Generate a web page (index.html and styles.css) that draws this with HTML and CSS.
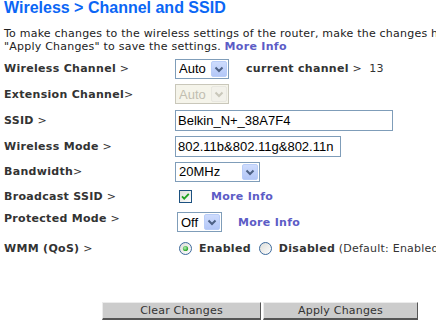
FILE: index.html
```html
<!DOCTYPE html>
<html lang="en">
<head>
    <meta charset="UTF-8">
    <title>Wireless - Channel and SSID</title>
    <link rel="stylesheet" href="styles.css">
</head>
<body>
    <div class="page">
        <h1 class="title">Wireless &gt; Channel and SSID</h1>
        <p class="intro">To make changes to the wireless settings of the router, make the changes here. Click<br>"Apply Changes" to save the settings. <a class="more" href="#">More Info</a></p>

        <div class="form">
            <div class="row short">
                <label class="label"><b>Wireless Channel</b> &gt;</label>
                <div class="field">
                    <span class="dd w54">
                        <select><option>Auto</option></select>
                        <span class="dd-btn"><svg width="14" height="14" viewBox="0 0 14 14"><path d="M3.5 5.5 L7 9 L10.5 5.5" fill="none" stroke="#4d6185" stroke-width="2"/></svg></span>
                    </span>
                    <span class="current"><b>current channel</b> &gt;&nbsp; 13</span>
                </div>
            </div>

            <div class="row">
                <label class="label"><b>Extension Channel</b>&gt;</label>
                <div class="field">
                    <span class="dd w54 off">
                        <select disabled><option>Auto</option></select>
                        <span class="dd-btn"><svg width="14" height="14" viewBox="0 0 14 14"><path d="M3.5 5.5 L7 9 L10.5 5.5" fill="none" stroke="#c9c7ba" stroke-width="2"/></svg></span>
                    </span>
                </div>
            </div>

            <div class="row">
                <label class="label"><b>SSID</b> &gt;</label>
                <div class="field">
                    <input class="text w218" type="text" value="Belkin_N+_38A7F4">
                </div>
            </div>

            <div class="row">
                <label class="label"><b>Wireless Mode</b> &gt;</label>
                <div class="field">
                    <input class="text w166" type="text" value="802.11b&amp;802.11g&amp;802.11n">
                </div>
            </div>

            <div class="row short">
                <label class="label"><b>Bandwidth</b>&gt;</label>
                <div class="field">
                    <span class="dd w85">
                        <select><option>20MHz</option></select>
                        <span class="dd-btn"><svg width="14" height="14" viewBox="0 0 14 14"><path d="M3.5 5.5 L7 9 L10.5 5.5" fill="none" stroke="#4d6185" stroke-width="2"/></svg></span>
                    </span>
                </div>
            </div>

            <div class="row short">
                <label class="label"><b>Broadcast SSID</b> &gt;</label>
                <div class="field">
                    <svg class="check" width="13" height="13" viewBox="0 0 13 13">
                        <defs>
                            <linearGradient id="cbfill" x1="0" y1="0" x2="1" y2="1">
                                <stop offset="0" stop-color="#dcdcd7"/>
                                <stop offset="1" stop-color="#ffffff"/>
                            </linearGradient>
                        </defs>
                        <rect x="0.5" y="0.5" width="12" height="12" fill="url(#cbfill)" stroke="#1c5180"/>
                        <path d="M3 6.3 L5.2 8.6 L9.8 3.8" fill="none" stroke="#21a121" stroke-width="1.8"/>
                    </svg>
                    <a class="more info1" href="#">More Info</a>
                </div>
            </div>

            <div class="row">
                <label class="label up"><b>Protected Mode</b> &gt;</label>
                <div class="field">
                    <span class="dd w45 shift">
                        <select><option>Off</option></select>
                        <span class="dd-btn"><svg width="14" height="14" viewBox="0 0 14 14"><path d="M3.5 5.5 L7 9 L10.5 5.5" fill="none" stroke="#4d6185" stroke-width="2"/></svg></span>
                    </span>
                    <a class="more info2" href="#">More Info</a>
                </div>
            </div>

            <div class="row">
                <label class="label"><b>WMM (QoS)</b> &gt;</label>
                <div class="field">
                    <svg class="radio first" width="13" height="13" viewBox="0 0 13 13">
                        <defs>
                            <linearGradient id="rdfill" x1="0" y1="0" x2="1" y2="1">
                                <stop offset="0" stop-color="#dcdcd7"/>
                                <stop offset="1" stop-color="#ffffff"/>
                            </linearGradient>
                            <radialGradient id="dot" cx="0.4" cy="0.4" r="0.6">
                                <stop offset="0" stop-color="#b8f0b8"/>
                                <stop offset="1" stop-color="#21a121"/>
                            </radialGradient>
                        </defs>
                        <circle cx="6.5" cy="6.5" r="6" fill="url(#rdfill)" stroke="#3d6a9c"/>
                        <circle cx="6.5" cy="6.5" r="2.6" fill="url(#dot)"/>
                    </svg>
                    <span class="opt"><b>Enabled</b></span>
                    <svg class="radio" width="13" height="13" viewBox="0 0 13 13">
                        <circle cx="6.5" cy="6.5" r="6" fill="url(#rdfill)" stroke="#3d6a9c"/>
                    </svg>
                    <span class="opt"><b>Disabled</b> (Default: Enabled)</span>
                </div>
            </div>
        </div>

        <div class="actions">
            <button class="btn clear" type="button">Clear Changes</button>
            <button class="btn apply" type="button">Apply Changes</button>
        </div>
    </div>
</body>
</html>
```

FILE: styles.css
```css
body {
    margin: 0;
    overflow: hidden;
    background: #fff;
    font-family: "DejaVu Sans", Verdana, sans-serif;
    font-size: 11px;
    letter-spacing: 0.22px;
    color: #222;
}

b {
    letter-spacing: 0.3px;
}

.page {
    width: 640px;
    padding: 0 4px;
}

.title {
    margin: 0;
    font: bold 16px/16px "Liberation Sans", Arial, sans-serif;
    letter-spacing: 0;
    color: #0b66f5;
}

.intro {
    margin: 11px 0 0;
    line-height: 13px;
    white-space: nowrap;
}

.more {
    color: #5c5cc6;
    font-weight: bold;
    letter-spacing: 0.3px;
    text-decoration: none;
}

.form {
    margin-top: 3px;
}

.row {
    display: flex;
    align-items: center;
    height: 26px;
}

.row.short {
    height: 25px;
}

.label {
    flex: none;
    width: 171px;
    line-height: 13px;
    color: #333;
}

.label.up {
    margin-top: -8px;
}

.field {
    display: flex;
    align-items: center;
    white-space: nowrap;
    color: #333;
}

/* dropdowns */
.dd {
    display: flex;
    box-sizing: border-box;
    height: 20px;
    border: 1px solid #7f9db9;
    background: #fff;
}

.dd select {
    flex: 1 1 auto;
    min-width: 0;
    height: 18px;
    margin: 0;
    padding: 0 0 0 3px;
    border: 0;
    background: transparent;
    -webkit-appearance: none;
    appearance: none;
    font: 13px "Liberation Sans", Arial, sans-serif;
    letter-spacing: 0;
    color: #000;
    outline: none;
}

.dd-btn {
    flex: none;
    display: flex;
    align-items: center;
    justify-content: center;
    box-sizing: border-box;
    width: 16px;
    height: 16px;
    margin: 1px 1px 1px 0;
    border: 1px solid #b9cdf8;
    border-radius: 2px;
    background: linear-gradient(#cedcfd, #b3c7f7);
}

.dd.off {
    border-color: #c9c7ba;
    background: #f5f4ea;
}

.dd.off select {
    color: #aca899;
}

.dd.off .dd-btn {
    border-color: #e8e7e0;
    background: #f2f1ea;
}

.w54 { width: 54px; }
.w85 { width: 85px; }
.w45 { width: 45px; }

.shift {
    margin-left: 2px;
}

.current {
    margin-left: 17px;
}

/* text fields */
.text {
    box-sizing: border-box;
    height: 21px;
    margin: 0;
    padding: 0 2px;
    border: 1px solid #7f9db9;
    font: 13px "Liberation Sans", Arial, sans-serif;
    letter-spacing: 0;
    color: #000;
}

.w218 { width: 218px; }
.w166 { width: 166px; }

.check {
    margin-left: 4px;
}

.info1 {
    margin-left: 19px;
}

.info2 {
    margin-left: 16px;
}

.radio.first {
    margin-left: 4px;
}

.opt {
    margin: 0 8px 0 7px;
}

/* buttons */
.actions {
    display: flex;
    gap: 2px;
    margin-top: 41px;
    padding-left: 98px;
}

.btn {
    box-sizing: border-box;
    height: 18px;
    margin: 0;
    padding: 0;
    background: #ccc;
    border: 1px solid;
    border-color: #ececec #555 #555 #ececec;
    border-bottom-width: 2px;
    font: 11px "DejaVu Sans", Verdana, sans-serif;
    letter-spacing: 0.2px;
    color: #333;
}

.clear { width: 159px; }
.apply { width: 155px; }
```
